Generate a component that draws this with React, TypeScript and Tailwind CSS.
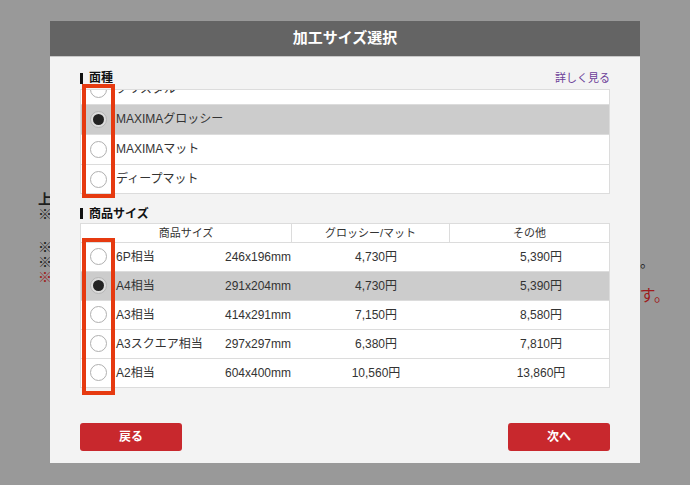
import { useState } from "react";

const font = { fontFamily: '"Liberation Sans", "Noto Sans CJK JP", sans-serif' };

const surfaces = ["クリスタル", "MAXIMAグロッシー", "MAXIMAマット", "ディープマット"];

const sizes = [
  { name: "6P相当", size: "246x196mm", glossy: "4,730円", other: "5,390円" },
  { name: "A4相当", size: "291x204mm", glossy: "4,730円", other: "5,390円" },
  { name: "A3相当", size: "414x291mm", glossy: "7,150円", other: "8,580円" },
  { name: "A3スクエア相当", size: "297x297mm", glossy: "6,380円", other: "7,810円" },
  { name: "A2相当", size: "604x400mm", glossy: "10,560円", other: "13,860円" },
];

function Radio({ checked }: { checked: boolean }) {
  return checked ? (
    <span className="flex h-[17px] w-[17px] shrink-0 items-center justify-center rounded-full border border-[#b5b5b5] bg-[#dcdcdc]">
      <span className="h-[11px] w-[11px] rounded-full bg-[#222]" />
    </span>
  ) : (
    <span className="h-[17px] w-[17px] shrink-0 rounded-full border border-[#b0b0b0] bg-white" />
  );
}

function SectionLabel({ children }: { children: React.ReactNode }) {
  return (
    <div className="flex h-[16px] items-center gap-[6px] text-[12px] font-bold leading-[16px] text-[#111]">
      <span className="h-[11px] w-[3px] bg-[#111]" />
      {children}
    </div>
  );
}

export default function App() {
  const [surface, setSurface] = useState(1);
  const [size, setSize] = useState(1);

  return (
    <div className="relative h-[485px] w-[690px] overflow-hidden bg-[#999999]" style={font}>
      {/* page behind the overlay */}
      <div className="pt-[192px] text-[14px] leading-[15px] text-[#1e1e1e]">
        <div className="pl-[38px] font-bold">上</div>
        <div className="pl-[38px]">※</div>
        <div className="h-[18px]" />
        <div className="pl-[38px]">※</div>
        <div className="flex justify-between pl-[38px] pr-[36px]">
          <span>※</span>
          <span>。</span>
        </div>
        <div className="pl-[38px] text-[#9e1d1d]">※</div>
        <div className="mt-[2px] flex justify-end pr-[20px] text-[16px] leading-[17px] text-[#9e1d1d]">ます。</div>
      </div>

      {/* modal */}
      <div className="absolute left-[50px] top-[21px] w-[590px] bg-[#f3f3f3]">
        <div className="flex h-[36px] items-center justify-center border-b border-[#c8c8c8] bg-[#646464] text-[15px] font-bold text-white">
          加工サイズ選択
        </div>

        <div className="px-[30px] pt-[13px] pb-[12px]">
          <div className="flex items-center justify-between">
            <SectionLabel>面種</SectionLabel>
            <span className="text-[11px] text-[#6b3d98]">詳しく見る</span>
          </div>

          <div className="relative mt-[2px]">
            <div className="h-[105px] overflow-hidden border border-[#dcdcdc] bg-white">
              <div className="-mt-[15px]">
                {surfaces.map((s, i) => (
                  <div
                    key={s}
                    onClick={() => setSurface(i)}
                    className={`flex h-[30px] items-center gap-[9px] border-b border-[#dcdcdc] pl-[9px] text-[12px] text-[#333] ${
                      surface === i ? "bg-[#cccccc]" : "bg-white"
                    }`}
                  >
                    <Radio checked={surface === i} />
                    <span>{s}</span>
                  </div>
                ))}
              </div>
            </div>
            <div className="pointer-events-none absolute -top-[5px] left-[2px] h-[114px] w-[33px] border-[4px] border-[#e63a10]" />
          </div>

          <div className="mt-[12px]">
            <SectionLabel>商品サイズ</SectionLabel>
          </div>

          <div className="relative mt-[1px] border-x border-t border-[#dcdcdc] bg-white">
            <div className="flex h-[19px] border-b border-[#dcdcdc] text-[11px] leading-[18px] text-[#333]">
              <div className="w-[211px] border-r border-[#dcdcdc] text-center">商品サイズ</div>
              <div className="w-[158px] border-r border-[#dcdcdc] text-center">グロッシー/マット</div>
              <div className="flex-1 text-center">その他</div>
            </div>
            {sizes.map((r, i) => (
              <div
                key={r.name}
                onClick={() => setSize(i)}
                className={`flex h-[29px] items-center border-b border-[#dcdcdc] pl-[9px] text-[12px] text-[#333] ${
                  size === i ? "bg-[#cccccc]" : "bg-white"
                }`}
              >
                <Radio checked={size === i} />
                <span className="ml-[9px] w-[109px]">{r.name}</span>
                <span className="w-[100px]">{r.size}</span>
                <span className="w-[102px] text-center">{r.glossy}</span>
                <span className="ml-[54px] w-[120px] text-center">{r.other}</span>
              </div>
            ))}
            <div className="pointer-events-none absolute left-[1px] top-[14px] h-[157px] w-[33px] border-[4px] border-[#e63a10]" />
          </div>

          <div className="mt-[35px] flex justify-between">
            <button className="h-[28px] w-[102px] rounded-[3px] bg-[#c8282d] text-[12px] font-bold text-white">戻る</button>
            <button className="h-[28px] w-[102px] rounded-[3px] bg-[#c8282d] text-[12px] font-bold text-white">次へ</button>
          </div>
        </div>
      </div>
    </div>
  );
}
